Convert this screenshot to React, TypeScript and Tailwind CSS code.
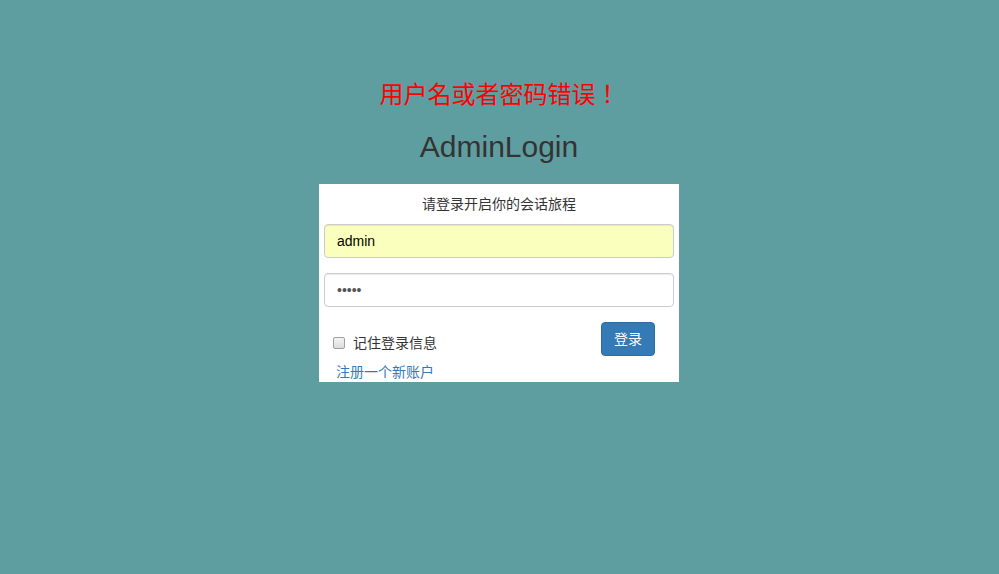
import React from "react";

export default function App() {
  const cjk = { fontFamily: '"Liberation Sans", "Noto Sans CJK SC", sans-serif' };
  return (
    <div
      className="min-h-[574px] w-full bg-[#5f9ea0] flex flex-col items-center pt-[79px]"
      style={cjk}
    >
      <div
        className="text-[24px] leading-[28px] text-[#ff0000]"
        style={{ fontFamily: '"Noto Sans CJK JP", "Noto Sans CJK SC", sans-serif' }}
      >
        用户名或者密码错误！
      </div>
      <div className="mt-[22px] mr-[1px] text-[30px] leading-[36px] text-[#333333]">AdminLogin</div>
      <div className="mt-[19px] mr-[1px] w-[360px] h-[198px] bg-white px-[5px] flex flex-col">
        <div className="pt-[10px] text-[14px] leading-[20px] text-[#333333] text-center">
          请登录开启你的会话旅程
        </div>
        <input
          readOnly
          type="text"
          value="admin"
          className="mt-[10px] h-[34px] w-full rounded-[4px] border border-[#cccccc] bg-[#faffbd] px-[12px] text-[14px] text-black outline-none shadow-[inset_0_1px_1px_rgba(0,0,0,0.075)]"
          style={cjk}
        />
        <input
          readOnly
          type="password"
          value="12345"
          className="mt-[15px] h-[34px] w-full rounded-[4px] border border-[#cccccc] bg-white px-[12px] text-[14px] text-[#555555] outline-none shadow-[inset_0_1px_1px_rgba(0,0,0,0.075)]"
          style={cjk}
        />
        <div className="mt-[15px] flex justify-between">
          <div className="flex flex-col pt-[11px]">
            <div className="flex items-center h-[20px] pl-[9px]">
              <div className="w-[12px] h-[12px] rounded-[2px] border border-[#a0a0a0] bg-gradient-to-b from-[#f4f4f4] to-[#dcdcdc]" />
              <span className="ml-[8px] text-[14px] leading-[20px] text-[#333333]">记住登录信息</span>
            </div>
            <div className="mt-[9px] pl-[12px] text-[14px] leading-[20px] text-[#337ab7]">注册一个新账户</div>
          </div>
          <button className="mr-[19px] h-[34px] w-[54px] rounded-[4px] border border-[#2e6da4] bg-[#337ab7] text-[14px] text-white">
            登录
          </button>
        </div>
      </div>
    </div>
  );
}
